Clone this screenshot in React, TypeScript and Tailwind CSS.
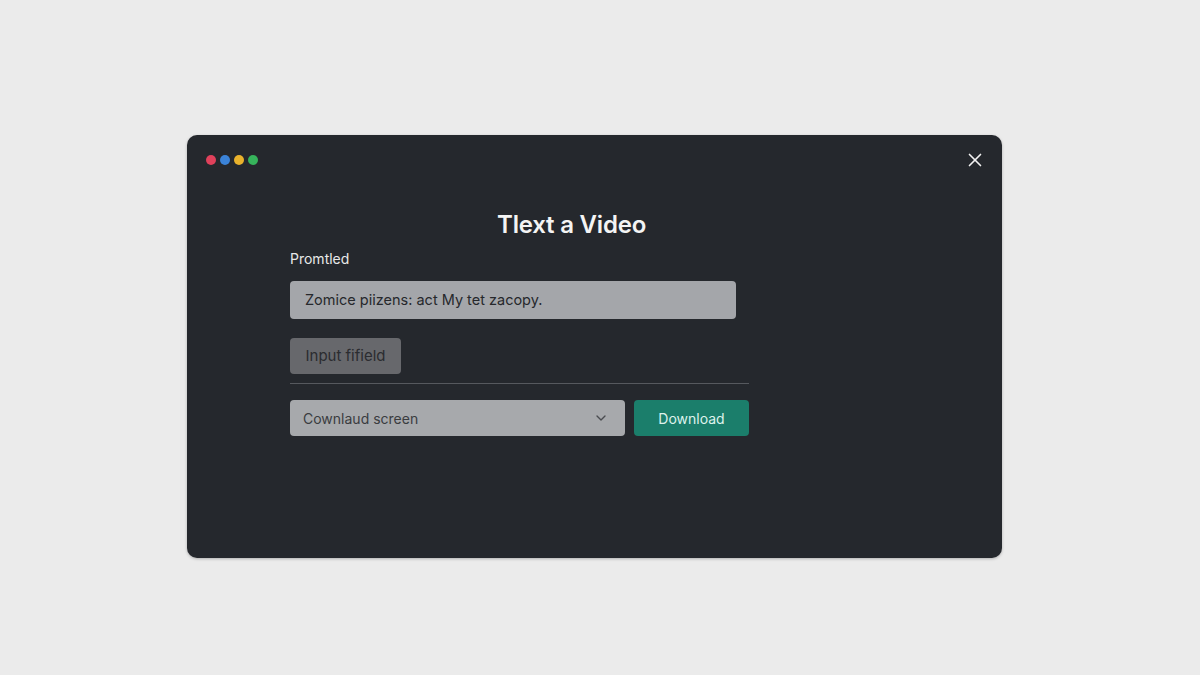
import { X, ChevronDown } from "lucide-react";

export default function App() {
  return (
    <div
      className="min-h-[675px] w-full bg-[#ebebeb] pt-[135px] pl-[187px]"
      style={{ fontFamily: "Inter, 'Noto Sans', sans-serif" }}
    >
      <div className="w-[815px] h-[423px] rounded-[10px] bg-[#25282d] shadow-[0_1px_3px_rgba(0,0,0,0.25)]">
        {/* Top bar */}
        <div className="flex items-center justify-between pt-[16px] pl-[19px] pr-[16px] h-[34px]">
          <div className="flex items-center gap-[4px]">
            <span className="w-[10px] h-[10px] rounded-full bg-[#e0415b]" />
            <span className="w-[10px] h-[10px] rounded-full bg-[#3b83d8]" />
            <span className="w-[10px] h-[10px] rounded-full bg-[#e9b22c]" />
            <span className="w-[10px] h-[10px] rounded-full bg-[#36b45b]" />
          </div>
          <X className="w-[22px] h-[22px] text-[#f2f2f2]" strokeWidth={1.8} />
        </div>

        {/* Content */}
        <div className="ml-[103px] w-[459px]">
          <h1 className="mt-[41px] pl-[207px] text-[24px] leading-[30px] font-semibold text-[#f4f4f4] whitespace-nowrap tracking-[-0.2px]">
            Tlext a Video
          </h1>

          <div className="mt-[9px] text-[14px] leading-[20px] text-[#e8e8e8]">Promtled</div>

          <div className="mt-[12px] w-[446px] h-[38px] rounded-[4px] bg-[#a4a6aa] flex items-center pl-[15px] text-[14.5px] text-[#26282c]">
            Zomice piizens: act My tet zacopy.
          </div>

          <button className="mt-[19px] w-[111px] h-[36px] rounded-[4px] bg-[#67686c] text-[15px] text-[#2b2c30] flex items-center justify-center">
            Input fifield
          </button>

          <div className="mt-[9px] h-px w-full bg-[#56595e]" />

          <div className="mt-[16px] flex gap-[9px]">
            <div className="w-[335px] h-[36px] rounded-[4px] bg-[#a7a9ac] flex items-center justify-between pl-[13px] pr-[16px] text-[14px] text-[#3a3c40]">
              <span>Cownlaud screen</span>
              <ChevronDown className="w-[16px] h-[16px] text-[#4a4c50]" strokeWidth={2} />
            </div>
            <button className="w-[115px] h-[36px] rounded-[4px] bg-[#1b7e6b] text-[14px] text-[#def2ec] flex items-center justify-center">
              Download
            </button>
          </div>
        </div>
      </div>
    </div>
  );
}
